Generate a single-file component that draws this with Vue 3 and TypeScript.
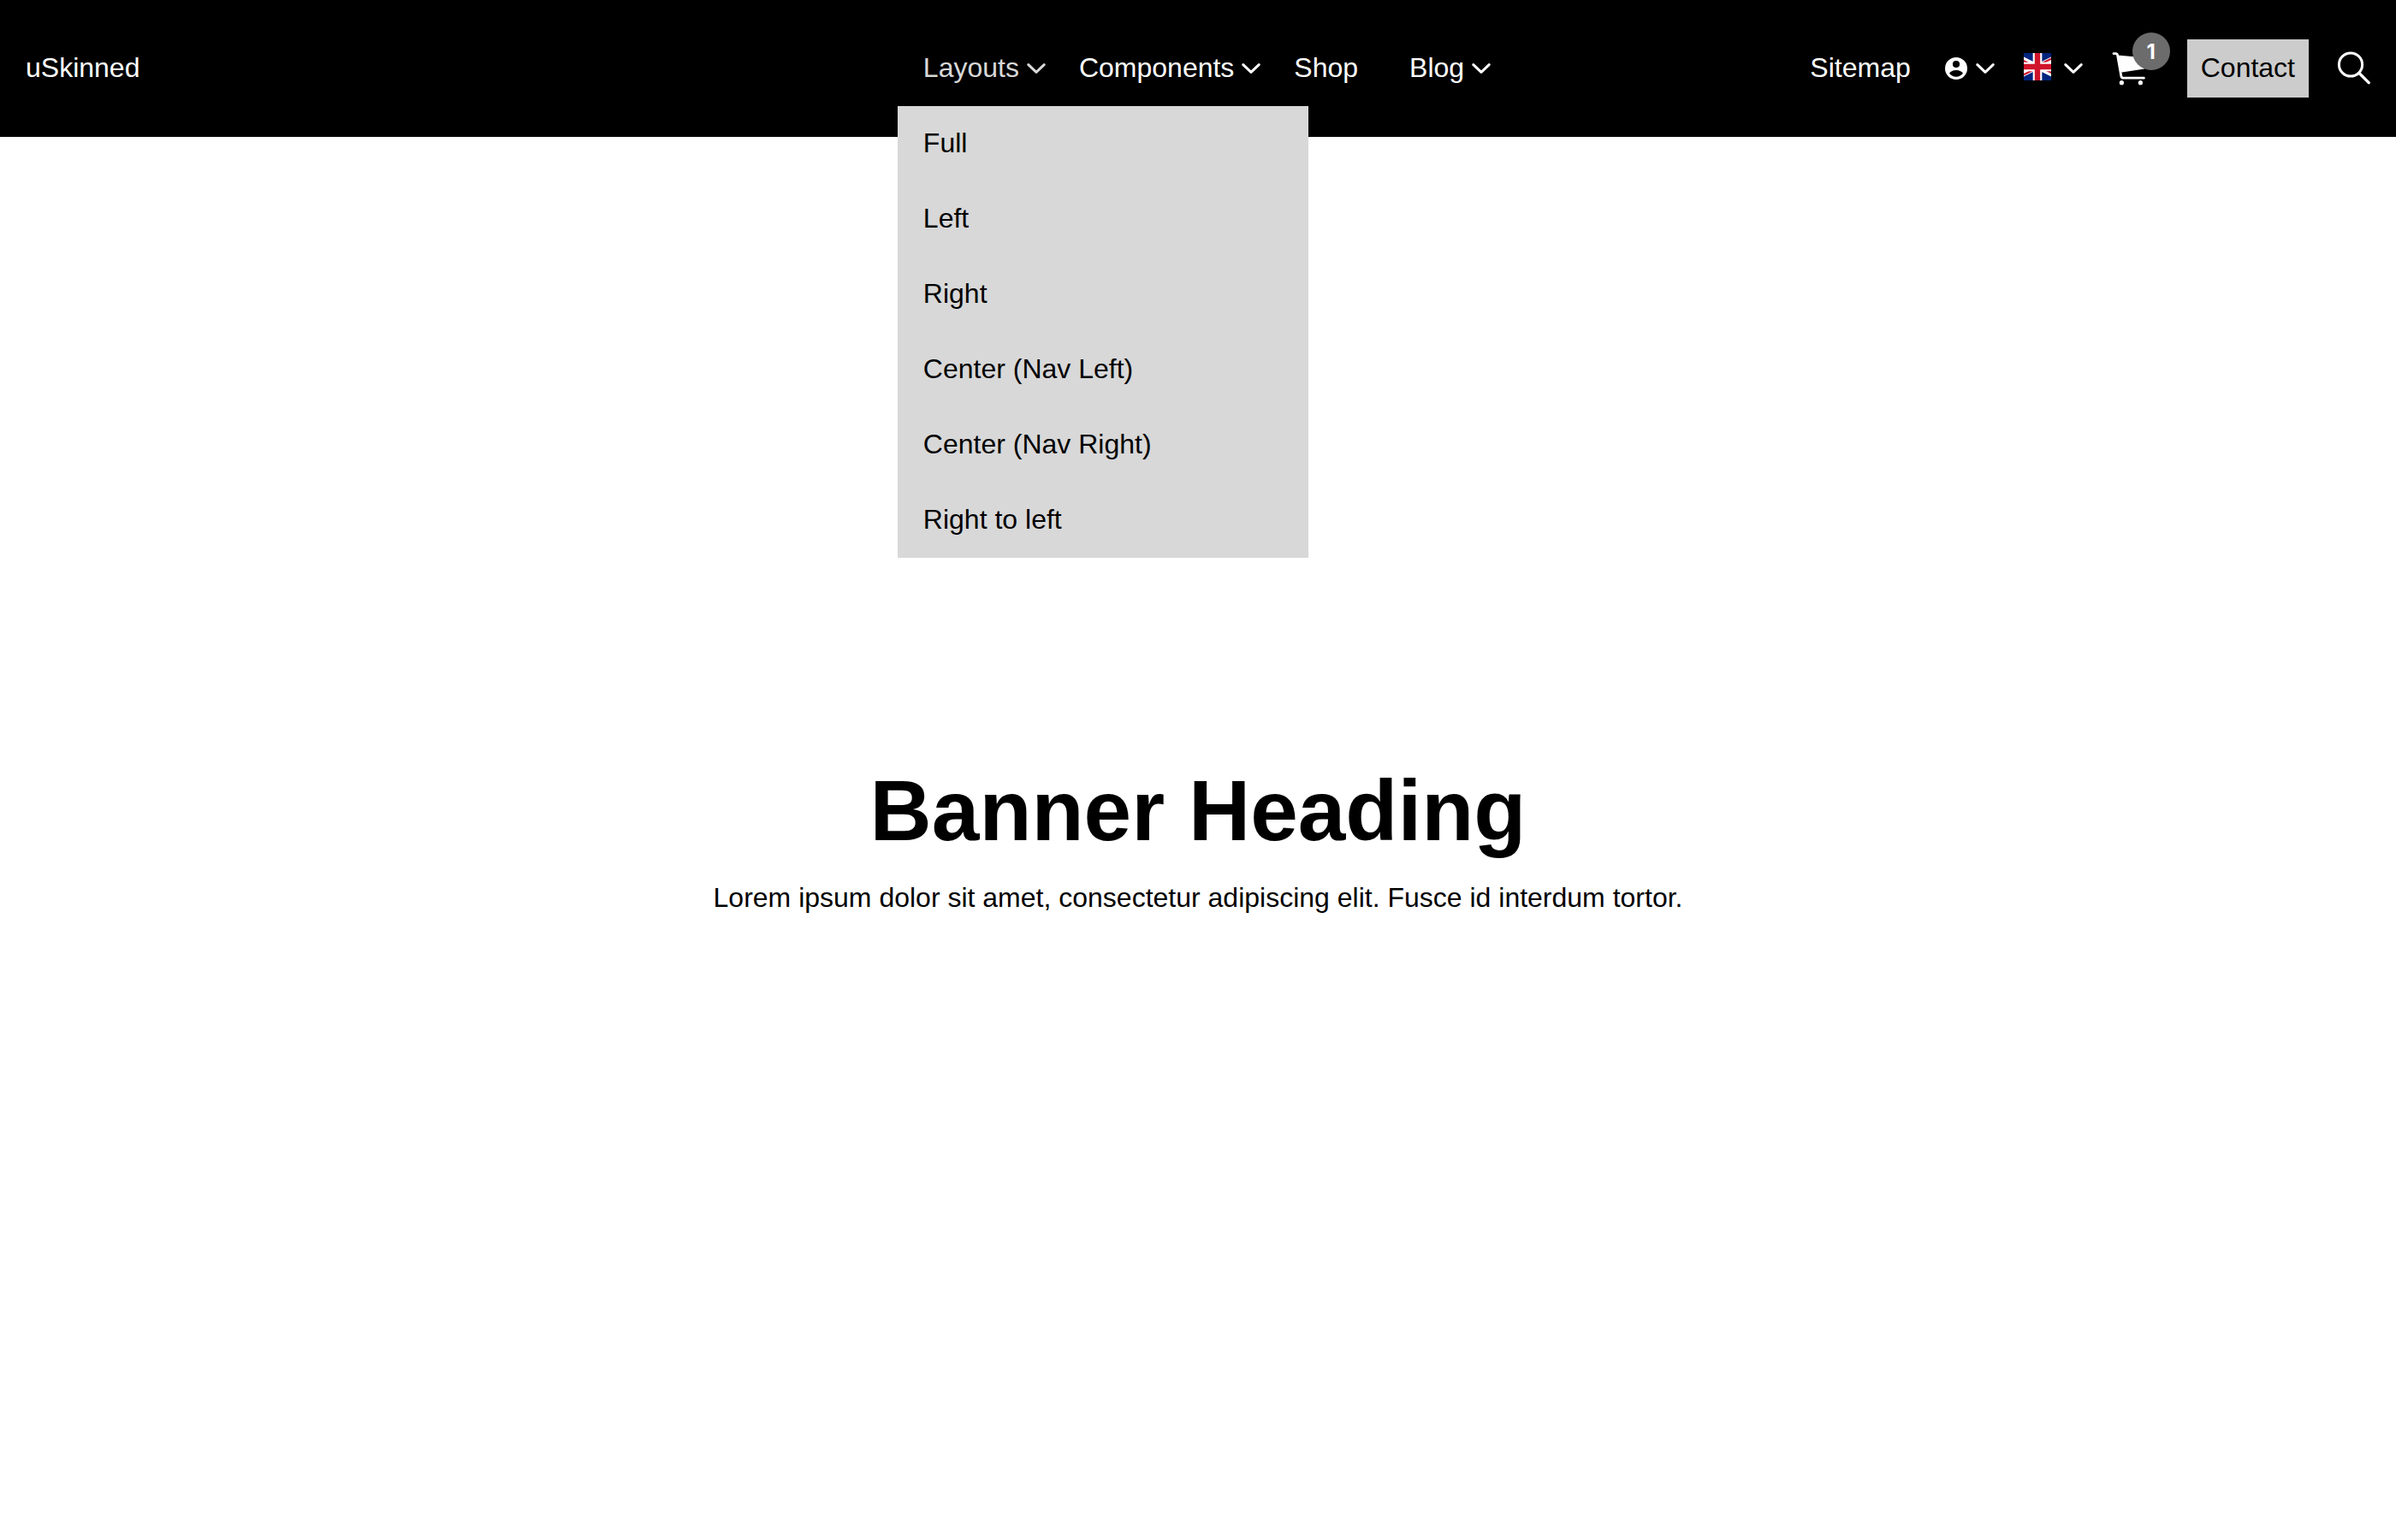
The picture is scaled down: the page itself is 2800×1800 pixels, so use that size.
<script setup lang="ts">
interface NavItem {
  label: string
  hasMenu: boolean
  children?: string[]
}

const navItems: NavItem[] = [
  {
    label: 'Layouts',
    hasMenu: true,
    children: ['Full', 'Left', 'Right', 'Center (Nav Left)', 'Center (Nav Right)', 'Right to left'],
  },
  { label: 'Components', hasMenu: true },
  { label: 'Shop', hasMenu: false },
  { label: 'Blog', hasMenu: true },
]

const cartCount = 1
</script>

<template>
  <div class="page">
    <header class="header">
      <a class="link logo" href="#">uSkinned</a>

      <nav aria-label="Main">
        <ul class="nav">
          <li
            v-for="item in navItems"
            :key="item.label"
            class="nav-item"
            :class="{ parent: item.hasMenu, open: item.children }"
          >
            <a class="link" href="#">{{ item.label }}</a>
            <svg v-if="item.hasMenu" class="chevron" viewBox="0 0 22 14" aria-hidden="true">
              <path d="M1.8 2.6 11 11.4 20.2 2.6" />
            </svg>
            <ul v-if="item.children" class="menu">
              <li v-for="child in item.children" :key="child">
                <a class="menu-link" href="#">{{ child }}</a>
              </li>
            </ul>
          </li>
        </ul>
      </nav>

      <div class="tools">
        <a class="link sitemap" href="#">Sitemap</a>

        <button class="tool user" type="button" aria-label="Account">
          <svg class="user-icon" viewBox="0 0 26 26" aria-hidden="true">
            <path
              fill="#fff"
              fill-rule="evenodd"
              d="M13 0a13 13 0 1 1 0 26 13 13 0 0 1 0-26Zm0 3.9a4.1 4.1 0 1 0 0 8.2 4.1 4.1 0 0 0 0-8.2Zm0 11.1c-4 0-7 1.8-7.9 3.8 1.5 2.4 4.5 3.9 7.9 3.9s6.4-1.5 7.9-3.9C20 16.8 17 15 13 15Z"
            />
          </svg>
          <svg class="chevron" viewBox="0 0 22 14" aria-hidden="true">
            <path d="M1.8 2.6 11 11.4 20.2 2.6" />
          </svg>
        </button>

        <button class="tool language" type="button" aria-label="Language">
          <svg class="flag" viewBox="15 0 30 30" aria-hidden="true">
            <clipPath id="saltire">
              <path d="M30 15h30v15zv15H0zH0V0zV0h30z" />
            </clipPath>
            <path fill="#00247d" d="M0 0h60v30H0z" />
            <path stroke="#fff" stroke-width="6" d="M0 0 60 30M60 0 0 30" />
            <path stroke="#cf142b" stroke-width="4" clip-path="url(#saltire)" d="M0 0 60 30M60 0 0 30" />
            <path stroke="#fff" stroke-width="10" d="M30 0v30M0 15h60" />
            <path stroke="#cf142b" stroke-width="6" d="M30 0v30M0 15h60" />
          </svg>
          <svg class="chevron" viewBox="0 0 22 14" aria-hidden="true">
            <path d="M1.8 2.6 11 11.4 20.2 2.6" />
          </svg>
        </button>

        <a class="cart" href="#" aria-label="Cart">
          <svg class="cart-icon" viewBox="0 0 40 40" aria-hidden="true">
            <path
              fill="none"
              stroke="#fff"
              stroke-width="2.8"
              stroke-linecap="round"
              stroke-linejoin="round"
              d="M2 2.600h2.800q1.400.1 1.700 1.500L10.800 28.700q.4 2.500 2.600 2.500h24"
            />
            <path fill="#fff" d="M6.400 4.400 40 7.500 38 20.600 12 24.600 10 24Z" />
            <circle cx="11.400" cy="36.700" r="2.600" fill="#fff" />
            <circle cx="33.400" cy="36.700" r="2.600" fill="#fff" />
          </svg>
          <span class="badge">{{ cartCount }}</span>
        </a>

        <a class="contact" href="#">Contact</a>

        <button class="tool" type="button" aria-label="Search">
          <svg class="search-icon" viewBox="0 0 38 40" aria-hidden="true">
            <circle cx="15" cy="15.500" r="13.600" fill="none" stroke="#fff" stroke-width="3" />
            <path stroke="#fff" stroke-width="3.400" stroke-linecap="round" d="m25.500 26 10.700 10.600" />
          </svg>
        </button>
      </div>
    </header>

    <main class="banner">
      <h1>Banner Heading</h1>
      <p>Lorem ipsum dolor sit amet, consectetur adipiscing elit. Fusce id interdum tortor.</p>
    </main>
  </div>
</template>

<style>
body {
  margin: 0;
  background: #fff;
}
</style>

<style scoped>
.page {
  display: flex;
  flex-direction: column;
  min-height: 100vh;
  font-family: "Liberation Sans", Arial, Helvetica, sans-serif;
  font-size: 32px;
  line-height: 48px;
  color: #000;
}

a {
  color: inherit;
  text-decoration: none;
}

ul {
  list-style: none;
  margin: 0;
  padding: 0;
}

svg {
  display: block;
  flex: none;
}

.header {
  display: grid;
  grid-template-columns: 1fr auto 1fr;
  align-items: center;
  height: 160px;
  padding: 0 30px;
  background: #000;
  color: #fff;
}

.link {
  padding-bottom: 2px;
}

.nav {
  display: flex;
}

.nav-item {
  position: relative;
  display: flex;
  align-items: center;
  height: 88px;
  padding: 0 30px;
}

.parent {
  gap: 9px;
  padding-right: 9px;
}

.open {
  color: #d8d8d8;
}

.chevron {
  width: 22px;
  height: 14px;
  fill: none;
  stroke: currentColor;
  stroke-width: 3;
  stroke-linecap: round;
  stroke-linejoin: round;
}

.menu {
  position: absolute;
  top: 100%;
  left: 0;
  z-index: 1;
  width: 480px;
  background: #d8d8d8;
  color: #000;
}

.menu-link {
  display: block;
  padding: 19px 30px 21px;
}

.tools {
  display: flex;
  align-items: center;
  justify-content: flex-end;
  gap: 34px;
}

.sitemap {
  margin-right: 6px;
}

.tool {
  display: flex;
  align-items: center;
  margin: 0;
  padding: 0;
  border: 0;
  background: none;
  color: inherit;
  font: inherit;
  cursor: pointer;
}

.user {
  gap: 10px;
}

.language {
  gap: 15px;
}

.user-icon {
  width: 26px;
  height: 26px;
}

.flag {
  width: 32px;
  height: 32px;
  margin-bottom: 4px;
}

.cart {
  position: relative;
  padding-right: 14px;
}

.cart-icon {
  width: 40px;
  height: 40px;
}

.badge {
  position: absolute;
  top: -22px;
  left: 24px;
  width: 44px;
  padding-top: 2px;
  border-radius: 50%;
  background: #6c6c6c;
  font-family: Inter, "Liberation Sans", sans-serif;
  font-size: 24px;
  font-weight: 700;
  line-height: 42px;
  text-align: center;
}

.contact {
  padding: 9px 16px 11px;
  background: #ccc;
  color: #000;
}

.search-icon {
  width: 38px;
  height: 40px;
}

.banner {
  display: flex;
  flex: 1;
  flex-direction: column;
  align-items: center;
  justify-content: center;
  gap: 18px;
  padding: 0 30px;
  text-align: center;
}

h1 {
  margin: 0;
  font-size: 100px;
  font-weight: 700;
  line-height: 120px;
}

p {
  margin: 0;
}
</style>
